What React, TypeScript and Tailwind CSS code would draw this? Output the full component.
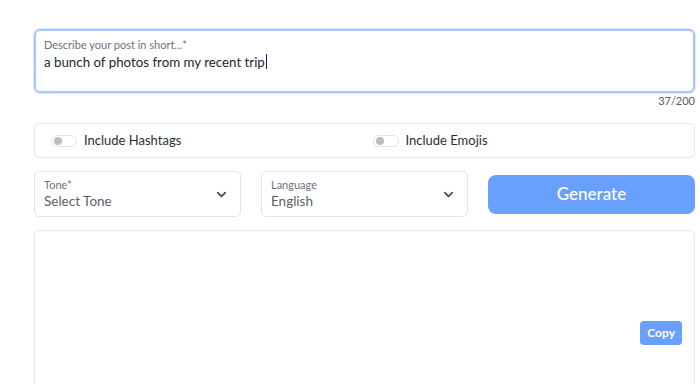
import { ChevronDown } from "lucide-react";

function Toggle({ label }: { label: string }) {
    return (
        <div className="flex items-center gap-[7px]">
            <div className="relative h-[12px] w-[26px] rounded-full border border-[#e3e3e3] bg-white">
                <div className="absolute left-[2px] top-[1px] h-[8px] w-[8px] rounded-full bg-[#bdbdbd]" />
            </div>
            <span className="text-[13px] text-[#2b2f36]">{label}</span>
        </div>
    );
}

function Select({ label, value }: { label: string; value: string }) {
    return (
        <div className="flex h-[46px] items-center justify-between rounded-[5px] border border-[#e4e4e4] bg-white pl-[9px] pr-[11px]">
            <div className="flex flex-col">
                <span className="text-[11px] leading-[14px] text-[#6b7280]">{label}</span>
                <span className="text-[13.5px] leading-[18px] text-[#5b6068]">{value}</span>
            </div>
            <ChevronDown size={15} strokeWidth={2.5} className="text-[#444]" />
        </div>
    );
}

export default function App() {
    return (
        <div className="h-[384px] w-[700px] overflow-hidden bg-white pl-[34px] pr-[5px] pt-[29px]" style={{ fontFamily: "Lato, 'Open Sans', sans-serif" }}>
            <div className="h-[64px] rounded-[6px] border-2 border-[#a9c6fb] px-[8px] pt-[7px] shadow-[0_0_0_1px_#dbe7fd]">
                <div className="text-[11px] leading-[14px] text-[#6b7280]">Describe your post in short...*</div>
                <div className="text-[13.3px] leading-[16px] text-[#1f2430]">
                    a bunch of photos from my recent trip<span className="ml-px inline-block h-[15px] w-px translate-y-[2px] bg-[#1f2430]" />
                </div>
            </div>
            <div className="mt-[1px] text-right text-[11px] leading-[14px] text-[#555b63]">37/200</div>

            <div className="mt-[15px] grid h-[35px] grid-cols-2 items-center gap-4 rounded-[5px] border border-[#e6e6e6] px-4">
                <Toggle label="Include Hashtags" />
                <Toggle label="Include Emojis" />
            </div>

            <div className="mt-[13px] grid grid-cols-3 items-center gap-[20px]">
                <Select label="Tone*" value="Select Tone" />
                <Select label="Language" value="English" />
                <button className="h-[39px] rounded-[8px] bg-[#6aa0fd] text-[17px] font-medium text-white">Generate</button>
            </div>

            <div className="mt-[13px] flex h-[170px] items-start justify-end rounded-[5px] border border-[#e8e8e8] pr-[12px] pt-[90px]">
                <button className="h-[24px] rounded-[4px] bg-[#6aa0fd] px-[7px] text-[12px] font-bold text-white">Copy</button>
            </div>
        </div>
    );
}
